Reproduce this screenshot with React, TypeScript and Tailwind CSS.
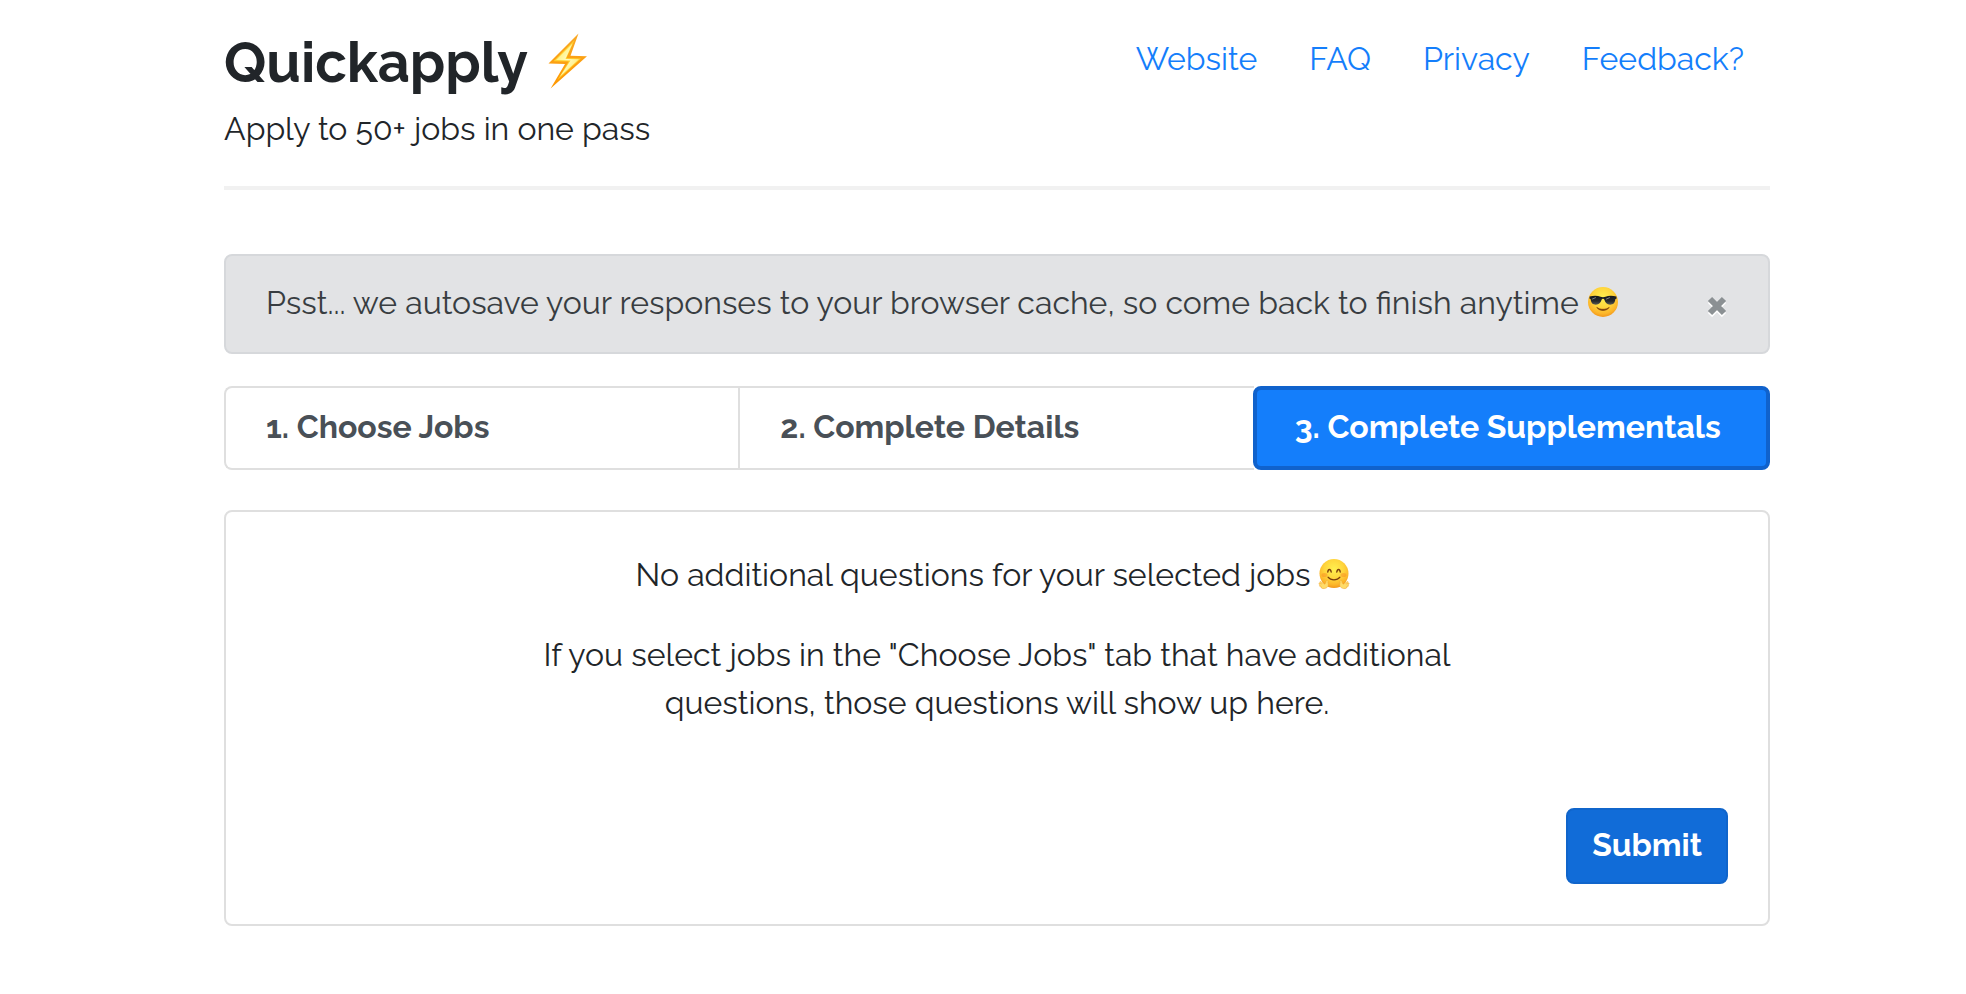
import { useState } from "react";

function BoltIcon() {
  return (
    <svg viewBox="0 0 40 56" className="mb-0.5 h-14 w-10 shrink-0" role="img" aria-label="Lightning">
      <defs>
        <linearGradient id="bolt-edge" x1="0" y1="0" x2="0" y2="1">
          <stop offset="0" stopColor="#f9a825" />
          <stop offset="1" stopColor="#ff9800" />
        </linearGradient>
        <linearGradient id="bolt-fill" x1="0" y1="0" x2="1" y2="1">
          <stop offset="0" stopColor="#ffe94a" />
          <stop offset="0.5" stopColor="#fffbc2" />
          <stop offset="1" stopColor="#ffe14a" />
        </linearGradient>
      </defs>
      <path d="M30.5.5 0.5 30.5l16.5.5L2.6 55.5 39 23.3l-16.500-.6z" fill="url(#bolt-edge)" />
      <path d="M26.500 7 5.500 28.200l15.200.4L9.500 47 33 25.400l-14.500-.4z" fill="#ffd02e" />
      <path d="M24.500 10.500 8 27l14.500.6L12 43.500 31 26.300l-13.500-.3z" fill="url(#bolt-fill)" />
    </svg>
  );
}

function FaceGradient({ id }: { id: string }) {
  return (
    <radialGradient id={id} cx="0.5" cy="0.35" r="0.68">
      <stop offset="0" stopColor="#fff04f" />
      <stop offset="0.5" stopColor="#ffd53c" />
      <stop offset="0.8" stopColor="#fcb429" />
      <stop offset="1" stopColor="#ef8f17" />
    </radialGradient>
  );
}

function SunglassesFace() {
  return (
    <svg viewBox="0 0 32 32" className="mb-0.5 size-8 shrink-0" role="img" aria-label="Smiling face with sunglasses">
      <defs>
        <FaceGradient id="cool-face" />
        <linearGradient id="lens" x1="0" y1="0" x2="0" y2="1">
          <stop offset="0" stopColor="#17191c" />
          <stop offset="0.6" stopColor="#26292d" />
          <stop offset="1" stopColor="#5b5b55" />
        </linearGradient>
      </defs>
      <circle cx="16" cy="16" r="15" fill="url(#cool-face)" />
      <path d="M9.800 21.400c3.500 2.600 8.900 2.600 12.400 0-2.600 4-9.800 4-12.400 0z" fill="#7a3d0c" stroke="#7a3d0c" strokeWidth="0.7" strokeLinejoin="round" />
      <path d="M2.600 10.500c4-1.200 8-1.100 11 .2 1.500.6 3.300.6 4.800 0 3-1.300 7-1.400 11-.2l.2 2-1.300.8c-.5 4-2 5.400-5.200 5.400-3.200 0-4.800-1.800-5.700-4.900-.4-1.300-2.400-1.300-2.800 0-.9 3.100-2.500 4.900-5.700 4.900-3.200 0-4.700-1.400-5.200-5.400l-1.300-.8z" fill="url(#lens)" />
      <path d="M5.500 13l3-1.300M19.500 13l3-1.300" stroke="#8a8d90" strokeWidth="0.9" strokeLinecap="round" />
    </svg>
  );
}

const handPath =
  "M9.200 22.200c.8.2 1 1.300.7 2.400.8 1.800.5 3.900-1 5-1.800 1.200-3.700 1.300-5.200.6-.6-.4-.3-1 .3-1-1-.1-1.900-.5-2.400-1-.4-.6.1-1.100.8-.9-.7-.3-1.300-.9-1.500-1.500-.1-.7.500-.9 1.100-.5l1.600.8-1.700-1.700c-.3-.6.3-1.100.9-.7l4 2.600c.8-.9 1.200-1.900 1.400-3.200.1-.6.500-1 1-.9z";

function HuggingFace() {
  return (
    <svg viewBox="0 0 32 32" className="mb-0.5 size-8 shrink-0" role="img" aria-label="Hugging face">
      <defs>
        <FaceGradient id="hug-face" />
      </defs>
      <circle cx="16" cy="15.500" r="14.500" fill="url(#hug-face)" />
      <ellipse cx="6.500" cy="17" rx="3" ry="2" fill="#f77f1d" opacity="0.4" />
      <ellipse cx="25.500" cy="17" rx="3" ry="2" fill="#f77f1d" opacity="0.4" />
      <path d="M9.800 14c.4-3.400 2.800-3.400 3.400 0M18.800 14c.6-3.400 3-3.400 3.400 0" fill="none" stroke="#7a3d0c" strokeWidth="1.400" strokeLinecap="round" />
      <path d="M10 19.200c2.900 3.600 9.100 3.600 12 0" fill="none" stroke="#7a3d0c" strokeWidth="1.200" strokeLinecap="round" />
      <g stroke="#efa52e" strokeWidth="0.500" fill="#ffdb68" strokeLinejoin="round">
        <path d={handPath} />
        <path d={handPath} transform="translate(32 0) scale(-1 1)" />
      </g>
    </svg>
  );
}

function CloseIcon() {
  return (
    <svg viewBox="0 0 22 28" className="h-7 w-[22px]" aria-hidden="true">
      <path d="M4 12l14 14M18 12L4 26" stroke="#fff" strokeWidth="6" />
      <path d="M4 10l14 14M18 10L4 24" stroke="#8b9093" strokeWidth="6" />
    </svg>
  );
}

const links = ["Website", "FAQ", "Privacy", "Feedback?"];
const steps = ["1. Choose Jobs", "2. Complete Details", "3. Complete Supplementals"];

export default function App() {
  const [showNotice, setShowNotice] = useState(true);
  const [active, setActive] = useState(2);

  return (
    <div className="min-h-screen bg-white pr-[196px] pl-[224px] font-['Raleway','Lato',sans-serif] text-[32px] leading-[48px] text-[#212529]">
      <header className="flex items-start justify-between border-b-4 border-[#f1f1f1] pt-7 pb-[33px]">
        <div>
          <h1 className="flex items-center gap-5 text-[56px] leading-[68px] font-bold">
            Quickapply
            <BoltIcon />
          </h1>
          <p className="mt-[9px]">Apply to 50+ jobs in one pass</p>
        </div>
        <nav className="flex gap-[52px] pt-[7px] pr-[26px] text-[#147efb]">
          {links.map((link) => (
            <a key={link} href="#">
              {link}
            </a>
          ))}
        </nav>
      </header>

      <main className="pt-16">
        {showNotice && (
          <div role="alert" className="mb-8 flex items-center justify-between rounded-lg border-2 border-[#d6d8db] bg-[#e2e3e5] px-10 pt-[23px] pb-[25px] text-[#383d41]">
            <p className="flex items-center gap-2">
              Psst... we autosave your responses to your browser cache, so come back to finish anytime
              <SunglassesFace />
            </p>
            <button type="button" aria-label="Close" onClick={() => setShowNotice(false)}>
              <CloseIcon />
            </button>
          </div>
        )}

        <div role="tablist" className="flex font-bold">
          {steps.map((step, i) => (
            <button
              key={step}
              type="button"
              role="tab"
              aria-selected={i === active}
              onClick={() => setActive(i)}
              className={
                i === active
                  ? "-ml-px h-[84px] flex-1 basis-0 rounded-lg border-4 border-[#1062cc] bg-[#147efb] px-[38px] pb-0.5 text-left whitespace-nowrap text-white first:ml-0"
                  : "-ml-px h-[84px] flex-1 basis-0 border-y-2 border-l-2 border-[#dfdfdf] px-10 pb-0.5 text-left whitespace-nowrap text-[#495057] first:ml-0 first:rounded-l-lg last:rounded-r-lg last:border-r-2"
              }
            >
              {step}
            </button>
          ))}
        </div>

        <section className="mt-10 rounded-lg border-2 border-[#dfdfdf] px-10 pt-[39px] pb-10">
          <div className="mx-auto max-w-[960px] text-center">
            <p className="flex items-center justify-center gap-2 pr-2">
              No additional questions for your selected jobs
              <HuggingFace />
            </p>
            <p className="mt-8">
              If you select jobs in the "Choose Jobs" tab that have additional questions, those questions will show up here.
            </p>
          </div>
          <div className="mt-[81px] flex justify-end">
            <button type="submit" className="h-[76px] rounded-lg border-2 border-[#1065cb] bg-[#116cd8] px-6 pb-0.5 font-bold text-white">
              Submit
            </button>
          </div>
        </section>
      </main>
    </div>
  );
}
